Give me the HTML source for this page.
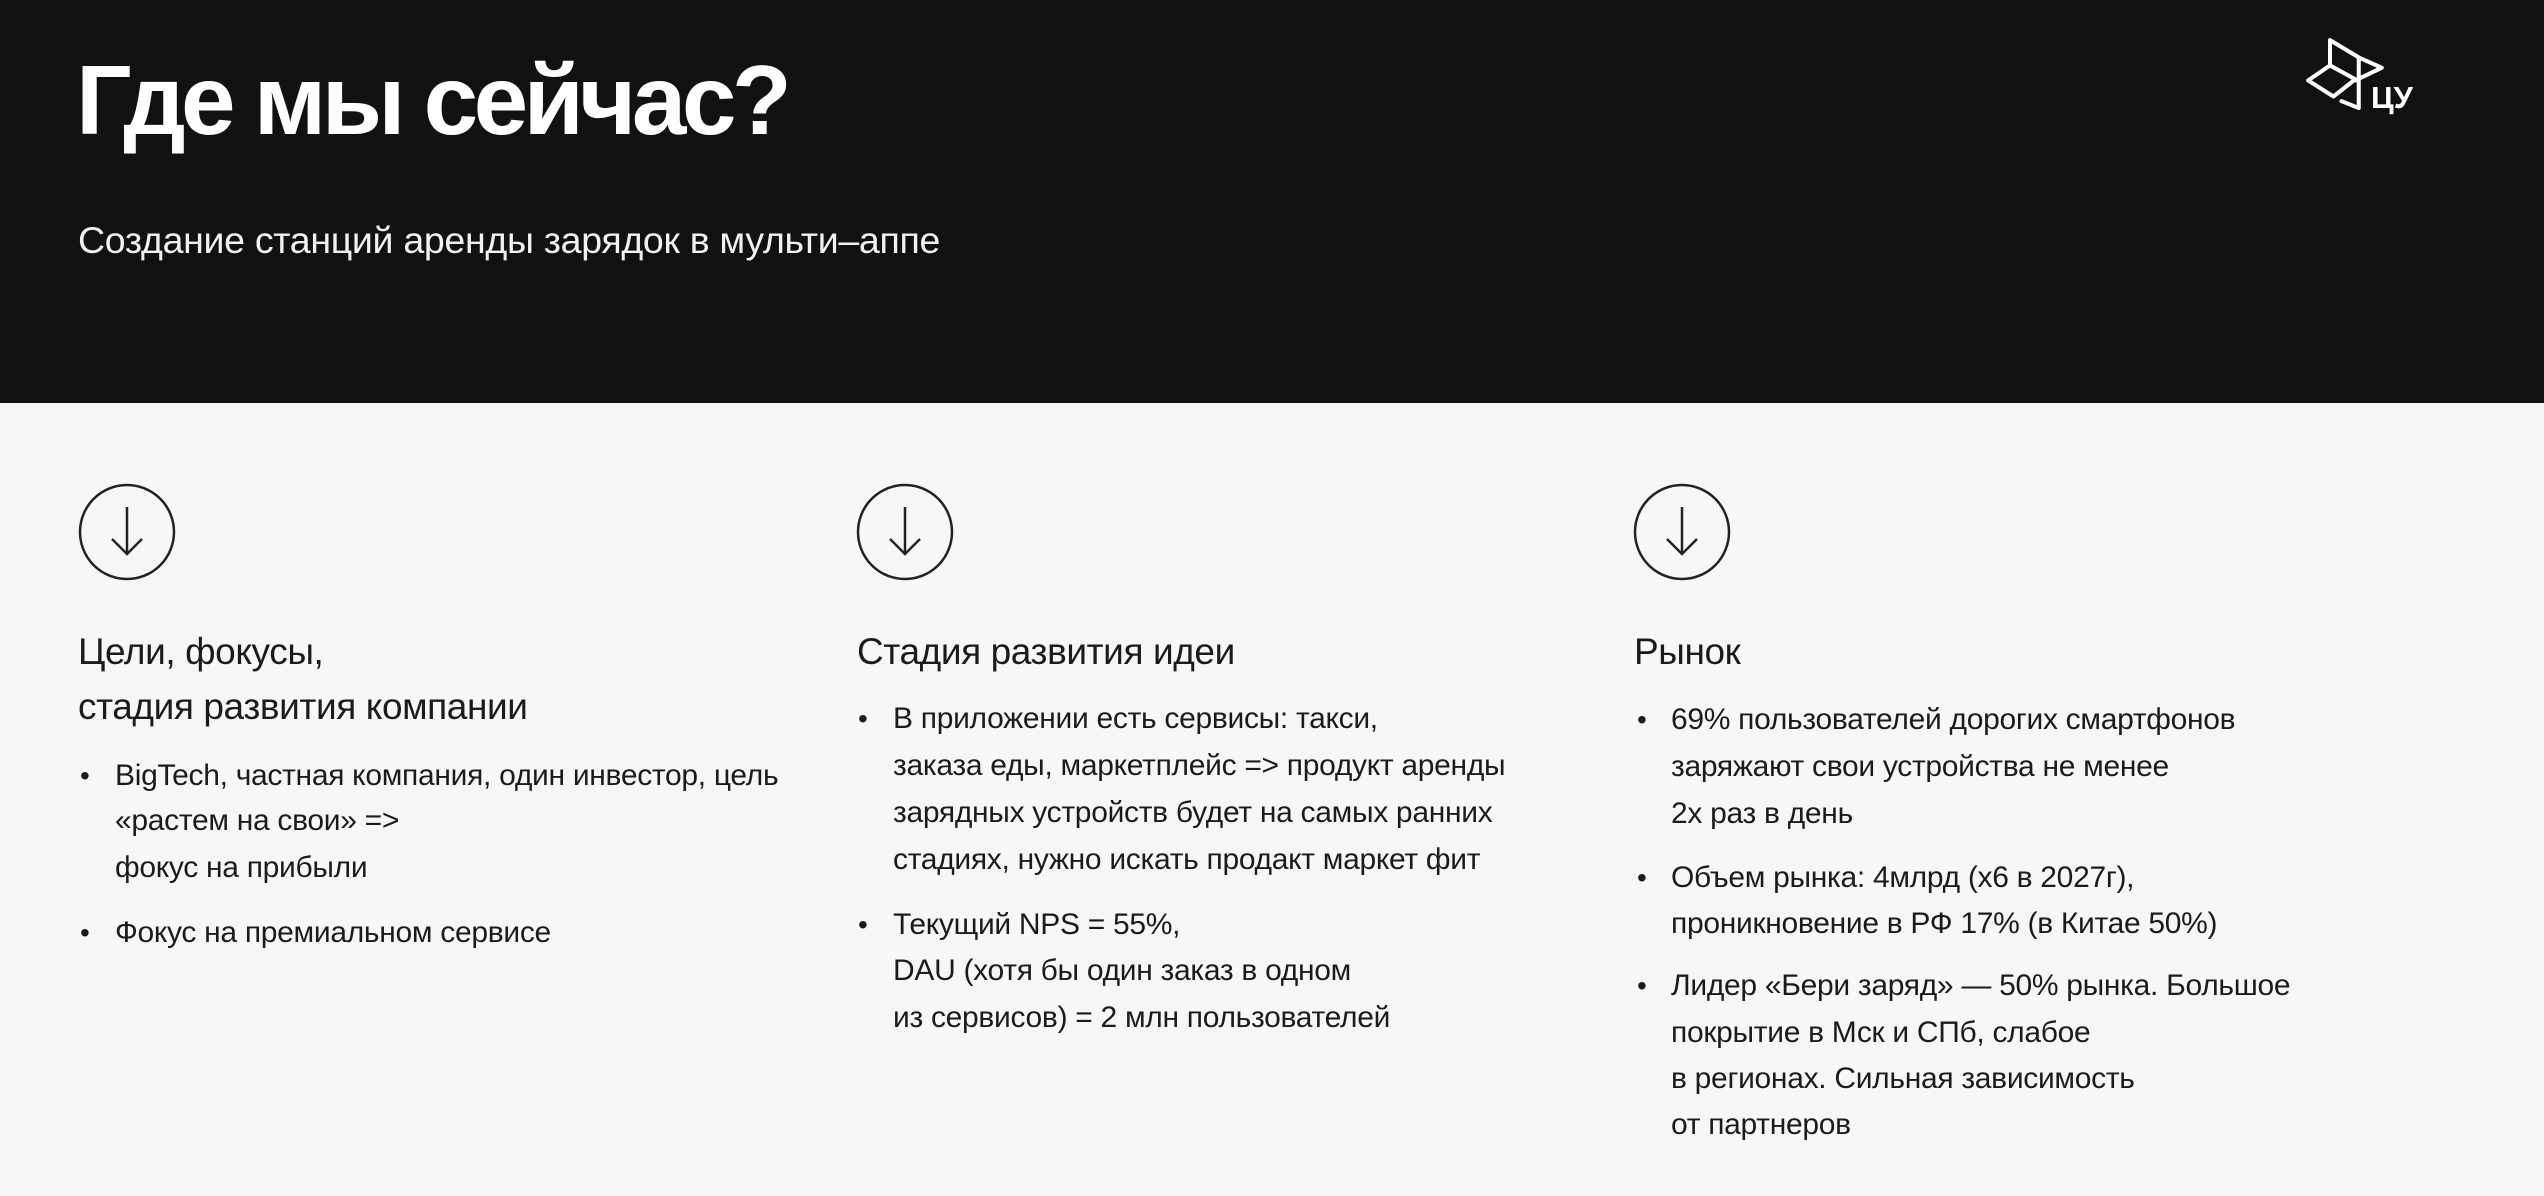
<!DOCTYPE html>
<html><head><meta charset="utf-8"><style>
*{margin:0;padding:0;box-sizing:border-box}
body{width:2544px;height:1196px;background:#f7f8f6;font-family:"Liberation Sans","DejaVu Sans",sans-serif;color:#1b1b1b;position:relative;overflow:hidden}
.top{position:absolute;left:0;top:0;width:2544px;height:403px;background:#111111}
.title{position:absolute;left:76px;top:40px;font-size:98px;font-weight:bold;color:#fff;letter-spacing:-4.5px;line-height:120px}
.sub{position:absolute;left:78px;top:217px;font-size:37.5px;color:#f2f2f2;line-height:46px;letter-spacing:-0.3px}
.circ{position:absolute;width:98px;height:98px}
.h{position:absolute;font-size:37px;line-height:56px;letter-spacing:-0.4px;white-space:nowrap}
.l{position:absolute;font-size:30px;line-height:46px;letter-spacing:-0.3px;white-space:nowrap}
.b{position:absolute;font-size:28px;line-height:46px}
</style></head><body>
<div class="top"></div>
<div class="title">Где мы сейчас?</div>
<div class="sub">Создание станций аренды зарядок в мульти–аппе</div>
<svg style="position:absolute;left:2250px;top:20px" width="294" height="150" viewBox="0 0 294 150">
<g fill="none" stroke="#fff" stroke-width="3.5" stroke-linejoin="round" stroke-linecap="round" transform="translate(-12,-4) scale(1.15)">
<path d="M80 21 L80 43 M80 21 L105 36 L105 80 M61 56 L80 43 L102 55 L83 70 Z M105 36 L125 45 L102 56 M90 74 L105 80"/>
</g>
<text x="121" y="88" fill="#fff" font-family="Liberation Sans" font-weight="bold" font-size="31">ЦУ</text>
</svg>
<svg class="circ" style="left:78px;top:483px" viewBox="0 0 98 98"><circle cx="49" cy="49" r="47" fill="none" stroke="#222" stroke-width="2.5"/><path d="M49 24 V70 M34 56 L49 71 L64 56" fill="none" stroke="#222" stroke-width="2.5"/></svg>
<svg class="circ" style="left:856px;top:483px" viewBox="0 0 98 98"><circle cx="49" cy="49" r="47" fill="none" stroke="#222" stroke-width="2.5"/><path d="M49 24 V70 M34 56 L49 71 L64 56" fill="none" stroke="#222" stroke-width="2.5"/></svg>
<svg class="circ" style="left:1633px;top:483px" viewBox="0 0 98 98"><circle cx="49" cy="49" r="47" fill="none" stroke="#222" stroke-width="2.5"/><path d="M49 24 V70 M34 56 L49 71 L64 56" fill="none" stroke="#222" stroke-width="2.5"/></svg>

<div class="h" style="left:78px;top:624px">Цели, фокусы,</div>
<div class="h" style="left:78px;top:679px">стадия развития компании</div>
<div class="b" style="left:80px;top:753px">•</div>
<div class="l" style="left:115px;top:753px">BigTech, частная компания, один инвестор, цель</div>
<div class="l" style="left:115px;top:798px">«растем на свои» =&gt;</div>
<div class="l" style="left:115px;top:845px">фокус на прибыли</div>
<div class="b" style="left:80px;top:910px">•</div>
<div class="l" style="left:115px;top:910px">Фокус на премиальном сервисе</div>

<div class="h" style="left:857px;top:624px">Стадия развития идеи</div>
<div class="b" style="left:858px;top:696px">•</div>
<div class="l" style="left:893px;top:696px">В приложении есть сервисы: такси,</div>
<div class="l" style="left:893px;top:743px">заказа еды, маркетплейс =&gt; продукт аренды</div>
<div class="l" style="left:893px;top:790px">зарядных устройств будет на самых ранних</div>
<div class="l" style="left:893px;top:837px">стадиях, нужно искать продакт маркет фит</div>
<div class="b" style="left:858px;top:902px">•</div>
<div class="l" style="left:893px;top:902px">Текущий NPS = 55%,</div>
<div class="l" style="left:893px;top:948px">DAU (хотя бы один заказ в одном</div>
<div class="l" style="left:893px;top:995px">из сервисов) = 2 млн пользователей</div>

<div class="h" style="left:1634px;top:624px">Рынок</div>
<div class="b" style="left:1637px;top:697px">•</div>
<div class="l" style="left:1671px;top:697px">69% пользователей дорогих смартфонов</div>
<div class="l" style="left:1671px;top:744px">заряжают свои устройства не менее</div>
<div class="l" style="left:1671px;top:791px">2х раз в день</div>
<div class="b" style="left:1637px;top:855px">•</div>
<div class="l" style="left:1671px;top:855px">Объем рынка: 4млрд (х6 в 2027г),</div>
<div class="l" style="left:1671px;top:901px">проникновение в РФ 17% (в Китае 50%)</div>
<div class="b" style="left:1637px;top:963px">•</div>
<div class="l" style="left:1671px;top:963px">Лидер «Бери заряд» — 50% рынка. Большое</div>
<div class="l" style="left:1671px;top:1010px">покрытие в Мск и СПб, слабое</div>
<div class="l" style="left:1671px;top:1056px">в регионах. Сильная зависимость</div>
<div class="l" style="left:1671px;top:1102px">от партнеров</div>
</body></html>
